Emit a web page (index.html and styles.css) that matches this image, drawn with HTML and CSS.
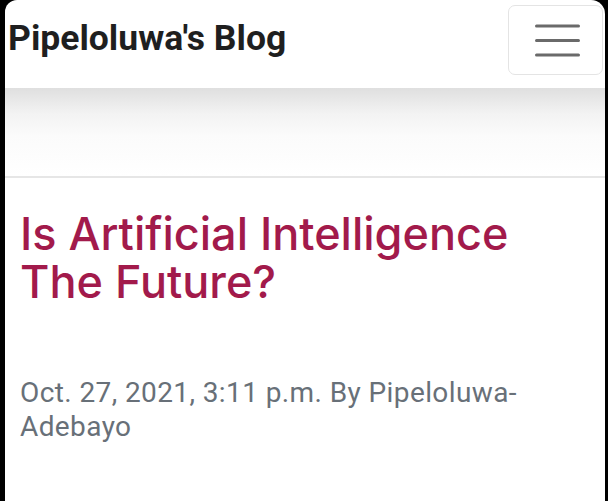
FILE: index.html
```html
<!DOCTYPE html>
<html lang="en">
<head>
<meta charset="utf-8">
<title>Pipeloluwa's Blog</title>
<link rel="stylesheet" href="styles.css">
</head>
<body>
<div class="frame">
  <nav class="navbar">
    <a class="brand" href="#">Pipeloluwa's Blog</a>
    <button class="toggler" aria-label="Toggle navigation">
      <svg width="45" height="33" viewBox="0 0 45 33">
        <path d="M1.5 2H43.5M1.5 16.5H43.5M1.5 31H43.5" stroke="#6a6a6a" stroke-width="3" stroke-linecap="round"/>
      </svg>
    </button>
  </nav>
  <div class="shade"></div>
  <article class="post">
    <h1 class="title">Is Artificial Intelligence The Future?</h1>
    <p class="meta">Oct. 27, 2021, 3:11 p.m. By Pipeloluwa-Adebayo</p>
  </article>
</div>
</body>
</html>
```

FILE: styles.css
```css
html, body {
  margin: 0;
  padding: 0;
  background: #000;
  height: 100%;
  overflow: hidden;
}
.frame {
  margin: 0 3px 0 5px;
  min-height: 501px;
  background: #fff;
  border-radius: 12px 14px 0 0;
}
.navbar {
  height: 88px;
  display: flex;
  align-items: flex-start;
  justify-content: space-between;
  padding: 5px 2px 0 3px;
  box-sizing: border-box;
}
.brand {
  display: block;
  margin-top: 13px;
  font-family: Roboto, "Liberation Sans", sans-serif;
  font-weight: 700;
  font-size: 35.5px;
  line-height: 41px;
  color: #1f1f1f;
  text-decoration: none;
}
.toggler {
  width: 95px;
  height: 70px;
  border: 1px solid #e4e4e4;
  border-radius: 7px;
  background: #fff;
  display: flex;
  align-items: center;
  justify-content: center;
  padding: 0 0 0 3px;
}
.shade {
  height: 88px;
  background: linear-gradient(#dfdfdf 0px, #f3f3f3 26px, #fbfbfb 48px, #fff 88px);
  border-bottom: 2px solid #e6e6e6;
}
.post {
  padding: 32px 12px 0 15px;
}
.title {
  margin: 0;
  max-width: 530px;
  font-family: Inter, "Open Sans", sans-serif;
  font-weight: 500;
  font-size: 45px;
  line-height: 48px;
  color: #a21a4b;
}
.meta {
  margin: 70px 0 0 0;
  max-width: 520px;
  font-family: Roboto, "Liberation Sans", sans-serif;
  font-size: 28px;
  letter-spacing: 0.4px;
  line-height: 34px;
  color: #687078;
}
```
